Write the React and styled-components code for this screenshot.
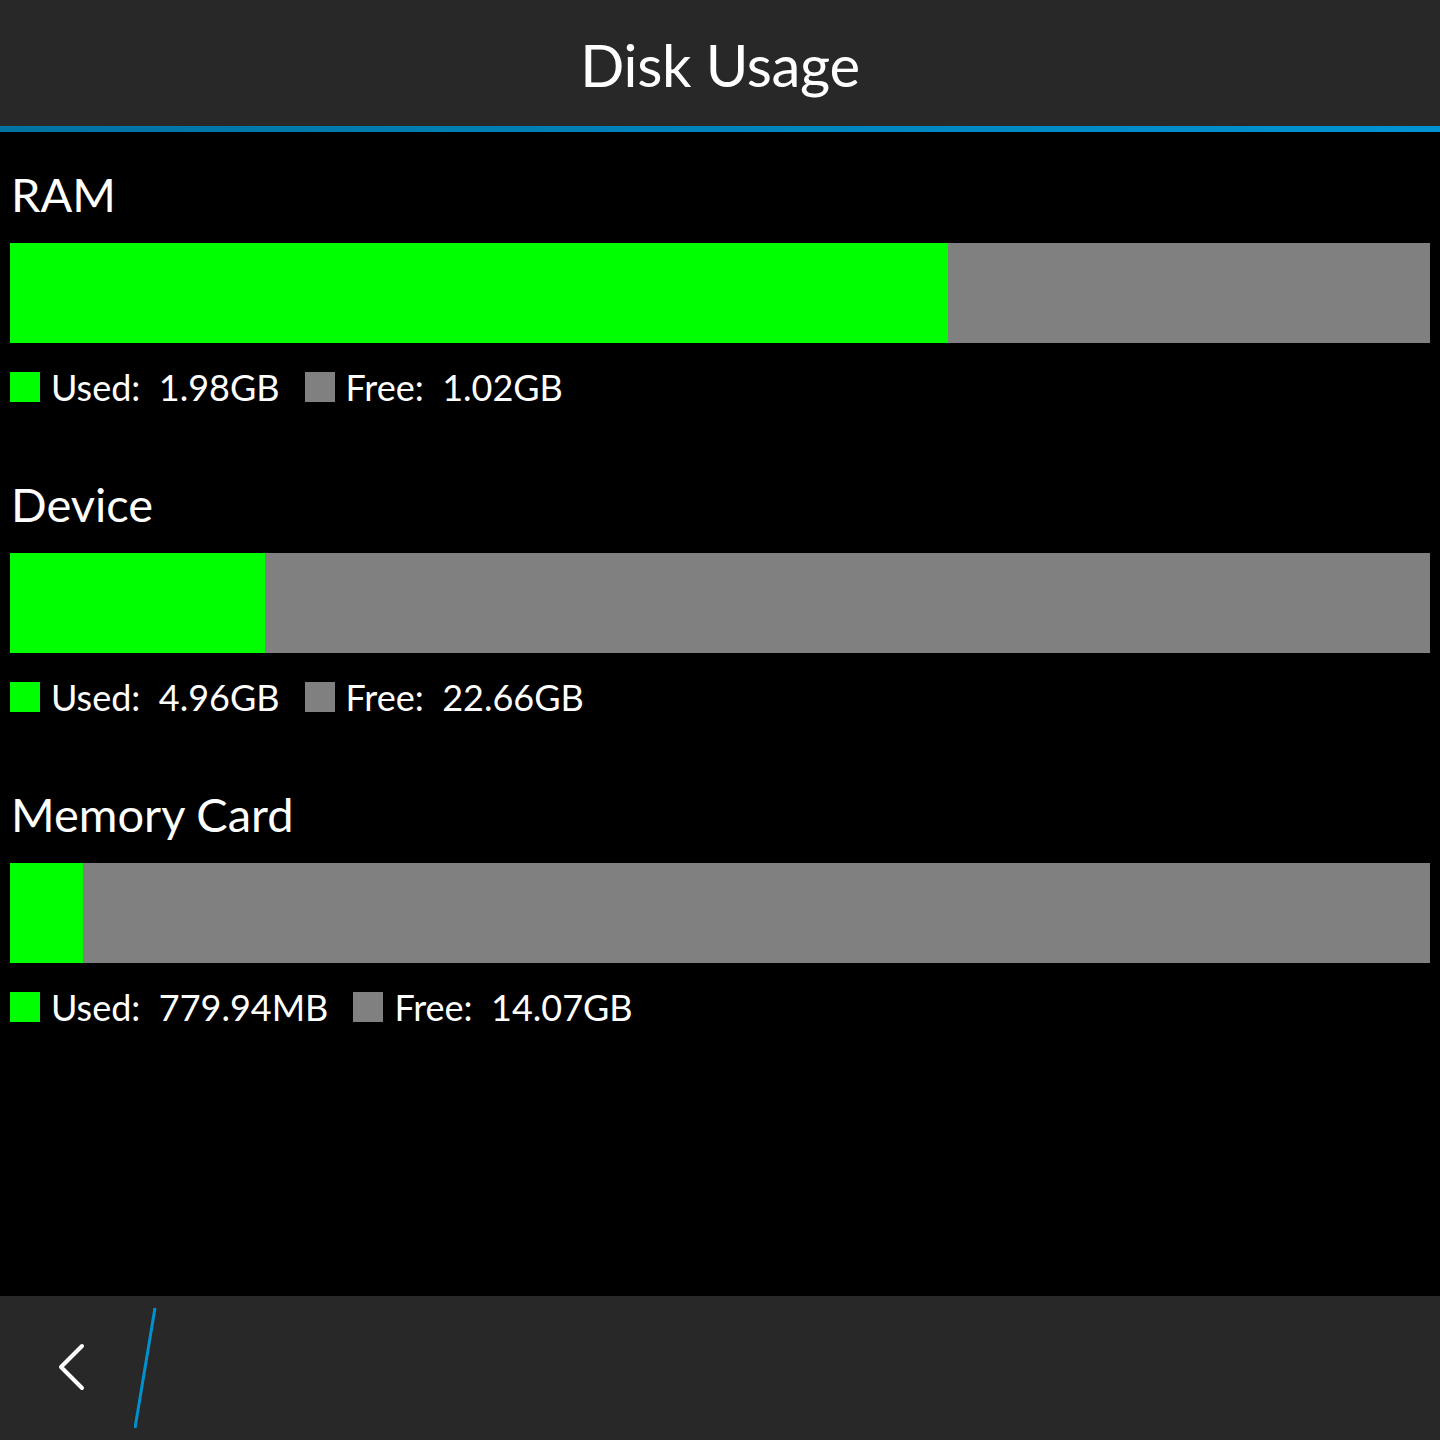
import React from 'react'
import styled, { createGlobalStyle } from 'styled-components'

const GlobalStyle = createGlobalStyle`
  html, body {
    margin: 0;
    padding: 0;
    background: #000;
  }
  body {
    font-family: Lato, "Open Sans", sans-serif;
    color: #fff;
  }
`

const disks = [
  { name: 'RAM', used: '1.98GB', free: '1.02GB', ratio: 0.6606 },
  { name: 'Device', used: '4.96GB', free: '22.66GB', ratio: 0.1796 },
  { name: 'Memory Card', used: '779.94MB', free: '14.07GB', ratio: 0.0514 },
]

const Screen = styled.div`
  display: flex;
  flex-direction: column;
  min-height: 1440px;
  background: #000;
`

const TitleBar = styled.header`
  height: 132px;
  box-sizing: border-box;
  padding-top: 4px;
  background: #282828;
  border-bottom: 6px solid #0085bd;
  border-image: linear-gradient(90deg, #0073a2, #0093d2) 1;
  display: flex;
  align-items: center;
  justify-content: center;
`

const Title = styled.h1`
  margin: 0;
  font-size: 58px;
  font-weight: 400;
  line-height: 58px;
  letter-spacing: -0.3px;
`

const Content = styled.main`
  flex: 1;
  padding: 38px 10px 0;
`

const Section = styled.section`
  margin-bottom: 78px;
`

const Label = styled.h2`
  margin: 0 0 25px 1px;
  font-size: 47px;
  font-weight: 400;
  line-height: 48px;
`

const Bar = styled.div`
  height: 100px;
  background: #808080;
  display: flex;
`

const Fill = styled.div`
  background: #00ff00;
  height: 100%;
`

const Legend = styled.div`
  margin-top: 29px;
  display: flex;
  align-items: flex-start;
  height: 30px;
`

const Swatch = styled.span`
  width: 30px;
  height: 30px;
  background: ${p => p.$color};
  margin-right: 11px;
  flex-shrink: 0;
`

const LegendText = styled.span`
  font-size: 36px;
  line-height: 31px;
  white-space: pre;
  margin-right: 25px;
`

const BottomBar = styled.footer`
  height: 144px;
  background: #282828;
  display: flex;
  align-items: flex-start;
`

const BackButton = styled.button`
  width: 134px;
  height: 144px;
  padding: 0 0 0 8px;
  background: none;
  border: 0;
  display: flex;
  align-items: center;
  justify-content: center;
`

const Divider = styled.svg`
  margin-top: 12px;
`

const App = () => {
  return (
    <Screen>
      <GlobalStyle />
      <TitleBar>
        <Title>Disk Usage</Title>
      </TitleBar>
      <Content>
        {disks.map(d => (
          <Section key={d.name}>
            <Label>{d.name}</Label>
            <Bar>
              <Fill style={{ width: `${d.ratio * 100}%` }} />
            </Bar>
            <Legend>
              <Swatch $color="#00ff00" />
              <LegendText>{`Used:  ${d.used}`}</LegendText>
              <Swatch $color="#808080" />
              <LegendText>{`Free:  ${d.free}`}</LegendText>
            </Legend>
          </Section>
        ))}
      </Content>
      <BottomBar>
        <BackButton aria-label="Back">
          <svg width="40" height="60" viewBox="0 0 40 60">
            <polyline points="31,8 10,29 31,50" fill="none" stroke="#fff" strokeWidth="4" strokeLinecap="round" strokeLinejoin="round" />
          </svg>
        </BackButton>
        <Divider width="30" height="122" viewBox="0 0 30 122">
          <line x1="21" y1="0" x2="1" y2="120" stroke="#0092d0" strokeWidth="3" />
        </Divider>
      </BottomBar>
    </Screen>
  )
}

export default App
